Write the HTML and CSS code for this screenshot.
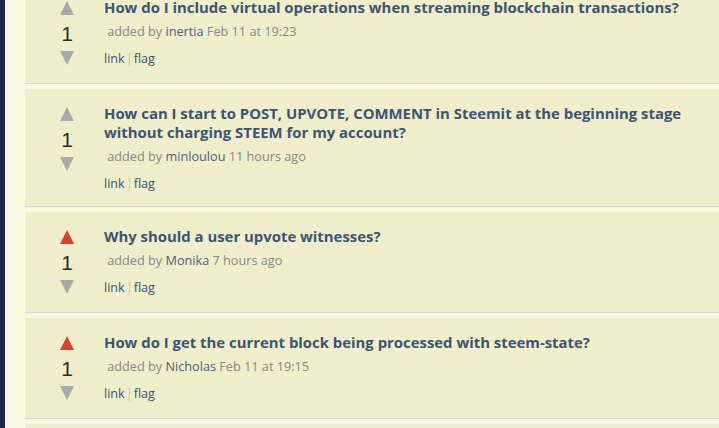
FILE: index.html
```html
<!DOCTYPE html>
<html>
<head>
<meta charset="utf-8">
<link rel="stylesheet" href="styles.css">
</head>
<body>
<div class="page">
  <div class="sidebar"></div>
  <div class="main">
    <div class="list">
      <div class="card">
        <div class="vote">
          <div class="arrow up"></div>
          <div class="count">1</div>
          <div class="arrow down"></div>
        </div>
        <div class="content">
          <a class="title">How do I include virtual operations when streaming blockchain transactions?</a>
          <div class="meta">&nbsp;added by <a class="user">inertia</a> Feb 11 at 19:23</div>
          <div class="links"><a>link</a><span class="sep">|</span><a>flag</a></div>
        </div>
      </div>
      <div class="card">
        <div class="vote">
          <div class="arrow up"></div>
          <div class="count">1</div>
          <div class="arrow down"></div>
        </div>
        <div class="content">
          <a class="title">How can I start to POST, UPVOTE, COMMENT in Steemit at the beginning stage without charging STEEM for my account?</a>
          <div class="meta">&nbsp;added by <a class="user">minloulou</a> 11 hours ago</div>
          <div class="links"><a>link</a><span class="sep">|</span><a>flag</a></div>
        </div>
      </div>
      <div class="card">
        <div class="vote">
          <div class="arrow up voted"></div>
          <div class="count">1</div>
          <div class="arrow down"></div>
        </div>
        <div class="content">
          <a class="title">Why should a user upvote witnesses?</a>
          <div class="meta">&nbsp;added by <a class="user">Monika</a> 7 hours ago</div>
          <div class="links"><a>link</a><span class="sep">|</span><a>flag</a></div>
        </div>
      </div>
      <div class="card">
        <div class="vote">
          <div class="arrow up voted"></div>
          <div class="count">1</div>
          <div class="arrow down"></div>
        </div>
        <div class="content">
          <a class="title">How do I get the current block being processed with steem-state?</a>
          <div class="meta">&nbsp;added by <a class="user">Nicholas</a> Feb 11 at 19:15</div>
          <div class="links"><a>link</a><span class="sep">|</span><a>flag</a></div>
        </div>
      </div>
      <div class="card card-last"></div>
    </div>
  </div>
</div>
</body>
</html>
```

FILE: styles.css
```css
html, body {
  margin: 0;
  padding: 0;
  height: 100%;
  overflow: hidden;
  background: #fbf8e2;
}
.page {
  display: flex;
  min-height: 100%;
}
.sidebar {
  width: 5px;
  flex: none;
  background: #1f2a4a;
}
.main {
  flex: 1;
  padding-left: 20px;
}
.list {
  margin-top: -17px;
  display: flex;
  flex-direction: column;
  gap: 5px;
}
.card {
  display: flex;
  align-items: flex-start;
  background: #f1eecb;
  border-bottom: 1px solid #d8d7cb;
}
.card-last {
  height: 100px;
}
.vote {
  width: 44px;
  margin-left: 20px;
  flex: none;
  display: flex;
  flex-direction: column;
  align-items: center;
  padding: 18px 0;
}
.arrow {
  width: 0;
  height: 0;
  border-left: 7px solid transparent;
  border-right: 7px solid transparent;
}
.arrow.up {
  border-bottom: 14px solid #aaaaaa;
}
.arrow.up.voted {
  border-bottom-color: #d7432c;
}
.arrow.down {
  border-top: 14px solid #aaaaaa;
  margin-top: 6px;
}
.count {
  margin-top: 8px;
  font-family: "Liberation Sans", Arial, sans-serif;
  font-size: 21px;
  line-height: 22px;
  color: #2b2b2b;
}
.content {
  margin-left: 15px;
  padding: 15px 0 12px;
  font-family: "Open Sans", sans-serif;
}
.title {
  display: block;
  font-weight: bold;
  font-size: 14.9px;
  line-height: 19px;
  color: #3b5574;
}
.meta {
  margin-top: 4px;
  font-size: 12.7px;
  line-height: 20px;
  color: #888;
}
.user {
  color: #4f6080;
}
.links {
  margin-top: 8px;
  font-size: 12.6px;
  line-height: 20px;
  color: #3b5574;
}
.sep {
  color: #c8c6b6;
  margin: 0 1px;
}
```
